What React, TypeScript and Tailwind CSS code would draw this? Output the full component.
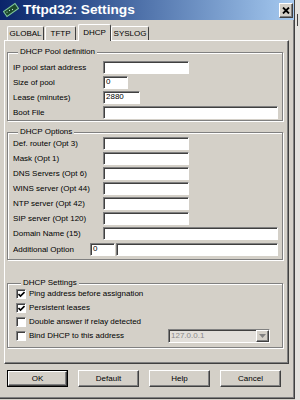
import type { ReactNode } from "react";

const sunken =
	"border border-t-[#808080] border-l-[#808080] border-b-white border-r-white shadow-[inset_1px_1px_0_#404040]";
const raised =
	"border border-t-white border-l-white border-b-[#404040] border-r-[#404040] shadow-[inset_-1px_-1px_0_#808080]";

function Input({ className = "", value = "" }: { className?: string; value?: string }) {
	return <div className={`h-[13px] shrink-0 bg-white pl-[2px] text-[8px] leading-[10px] ${sunken} ${className}`}>{value}</div>;
}

function Row({ label, children }: { label: string; children: ReactNode }) {
	return (
		<div className="flex h-[15px] items-center">
			<span className="w-[90px] shrink-0">{label}</span>
			{children}
		</div>
	);
}

function Group({ title, className = "", children }: { title: string; className?: string; children: ReactNode }) {
	return (
		<div className={`border border-[#808080] shadow-[inset_1px_1px_0_#fff,1px_1px_0_#fff] ${className}`}>
			<div className="-mt-[6px] ml-[5px] w-fit bg-[#d4d0c8] px-[2px] leading-[10px]">{title}</div>
			{children}
		</div>
	);
}

function Check({ checked, label }: { checked?: boolean; label: string }) {
	return (
		<div className="flex h-[14px] items-center">
			<div className={`flex h-[10px] w-[10px] shrink-0 items-center justify-center bg-white ${sunken}`}>
				{checked && (
					<svg width="7" height="7" viewBox="0 0 7 7">
						<path d="M0.5 3 L2.5 5 L6.5 1" stroke="#000" strokeWidth="1.6" fill="none" />
					</svg>
				)}
			</div>
			<span className="ml-[3px]">{label}</span>
		</div>
	);
}

function Tab({ label, active, className = "" }: { label: string; active?: boolean; className?: string }) {
	if (active) {
		return (
			<div
				className={`relative z-10 -mb-px flex h-[17px] items-start justify-center rounded-t-[2px] border-t border-l border-r border-t-white border-l-white border-r-[#404040] bg-[#d4d0c8] pt-[2px] ${className}`}
			>
				{label}
			</div>
		);
	}
	return (
		<div
			className={`flex h-[14px] items-center justify-center rounded-t-[2px] border-t border-l border-r border-t-white border-l-white border-r-[#404040] ${className}`}
		>
			{label}
		</div>
	);
}

function Button({ label, def }: { label: string; def?: boolean }) {
	return (
		<div className={`w-[61px] h-[17px] ${def ? "border border-black" : ""}`}>
			<div className={`flex h-full w-full items-center justify-center bg-[#d4d0c8] ${raised}`}>{label}</div>
		</div>
	);
}

export default function App() {
	return (
		<div className="flex h-[400px] w-[300px] overflow-hidden bg-[#d4d0c8] font-['Liberation_Sans',Arial,sans-serif] text-[8px] text-black">
			<div className="flex h-[399px] w-[295px] shrink-0 flex-col border-r border-b border-[#404040] shadow-[inset_-1px_-1px_0_#808080]">
				<div className="flex h-[20px] shrink-0 items-center bg-gradient-to-r from-[#0a246a] to-[#a6caf0] pl-[3px]">
					<svg width="16" height="16" viewBox="0 0 16 16">
						<g transform="rotate(-35 8 8)">
							<rect x="1" y="5" width="14" height="6" fill="#1d4a2c" stroke="#7fc79a" strokeWidth="1" />
							<rect x="3" y="7" width="1" height="1" fill="#cfe" />
							<rect x="6" y="7" width="1" height="1" fill="#cfe" />
							<rect x="9" y="8" width="1" height="1" fill="#cfe" />
						</g>
					</svg>
					<span className="ml-[4px] text-[13.7px] font-bold leading-none text-white">Tftpd32: Settings</span>
					<div className={`ml-auto mr-[1px] flex h-[15px] w-[14px] items-center justify-center bg-[#d4d0c8] ${raised}`}>
						<svg width="8" height="7" viewBox="0 0 8 7">
							<path d="M1 0.5 L7 6.5 M7 0.5 L1 6.5" stroke="#000" strokeWidth="1.8" />
						</svg>
					</div>
				</div>

				<div className="flex flex-col pl-[4px]">
					<div className="flex h-[20px] items-end pl-[3px] pt-[4px]">
						<Tab label="GLOBAL" className="w-[37px]" />
						<Tab label="TFTP" className="ml-[1px] w-[31px]" />
						<Tab label="DHCP" active className="ml-[2px] w-[33px]" />
						<Tab label="SYSLOG" className="w-[38px]" />
					</div>

					<div className="flex h-[324px] w-[285px] flex-col border border-t-white border-l-white border-b-[#404040] border-r-[#404040] px-[2px] pt-[11px] shadow-[inset_-1px_-1px_0_#808080]">
						<Group title="DHCP Pool definition" className="w-[276px] pl-[5px] pr-[4px]">
							<div className="mt-[3px]">
								<Row label="IP pool start address">
									<Input className="w-[86px]" />
								</Row>
								<Row label="Size of pool">
									<Input className="w-[25px]" value="0" />
								</Row>
								<Row label="Lease (minutes)">
									<Input className="w-[37px]" value="2880" />
								</Row>
								<Row label="Boot File">
									<Input className="flex-1" />
								</Row>
							</div>
						</Group>

						<Group title="DHCP Options" className="mt-[11px] w-[276px] pb-[2px] pl-[5px] pr-[4px]">
							<div className="-mt-[1px]">
								<Row label="Def. router (Opt 3)">
									<Input className="w-[86px]" />
								</Row>
								<Row label="Mask (Opt 1)">
									<Input className="w-[86px]" />
								</Row>
								<Row label="DNS Servers (Opt 6)">
									<Input className="w-[86px]" />
								</Row>
								<Row label="WINS server (Opt 44)">
									<Input className="w-[86px]" />
								</Row>
								<Row label="NTP server (Opt 42)">
									<Input className="w-[86px]" />
								</Row>
								<Row label="SIP server (Opt 120)">
									<Input className="w-[86px]" />
								</Row>
								<Row label="Domain Name (15)">
									<Input className="flex-1" />
								</Row>
								<div className="mt-[1px] flex h-[15px] items-center">
									<span className="w-[77px] shrink-0">Additional Option</span>
									<Input className="w-[25px]" value="0" />
									<Input className="ml-[1px] flex-1" />
								</div>
							</div>
						</Group>

						<Group title="DHCP Settings" className="mt-[23px] w-[276px] pb-[4px] pl-[8px]">
							<div className="-mt-[1px]">
								<Check checked label="Ping address before assignation" />
								<Check checked label="Persistent leases" />
								<Check label="Double answer if relay detected" />
								<div className="flex h-[14px] items-center">
									<Check label="Bind DHCP to this address" />
									<div className={`ml-auto mr-[12px] flex h-[14px] w-[102px] items-center bg-[#e2dfda] ${sunken}`}>
										<span className="flex-1 pl-[2px] text-[#8a8a8a]">127.0.0.1</span>
										<div className={`flex h-full w-[13px] items-center justify-center bg-[#d4d0c8] ${raised}`}>
											<svg width="7" height="4" viewBox="0 0 7 4">
												<path d="M0 0 H7 L3.5 4 Z" fill="#808080" />
											</svg>
										</div>
									</div>
								</div>
							</div>
						</Group>
					</div>

					<div className="mt-[6px] flex gap-[10px] pl-[3px]">
						<Button label="OK" def />
						<Button label="Default" />
						<Button label="Help" />
						<Button label="Cancel" />
					</div>
				</div>
			</div>
			<div className="flex h-[400px] flex-1 bg-[#e4e2de]">
				<div className="ml-[2px] mt-[14px] h-[12px] w-[1px] bg-[#404040]" />
			</div>
		</div>
	);
}
